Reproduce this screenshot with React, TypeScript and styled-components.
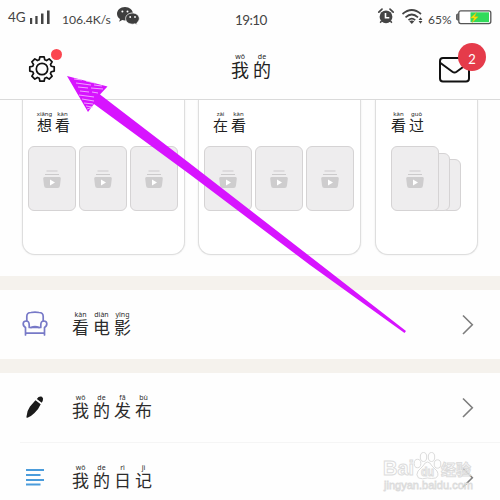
import React from 'react';
import styled, { createGlobalStyle } from 'styled-components';

const GlobalStyle = createGlobalStyle`
  * { box-sizing: border-box; }
  body { margin: 0; background: #fefefe; overflow: hidden; }
  svg { display: block; overflow: visible; }
`;

const Screen = styled.div`
  position: relative;
  width: 500px;
  height: 500px;
  overflow: hidden;
  display: flex;
  flex-direction: column;
  background: #fefefe;
  color: #222;
  font-family: 'Noto Sans', 'Noto Sans CJK SC', sans-serif;
`;

const StatusBar = styled.div`
  flex: none;
  height: 34px;
  display: grid;
  grid-template-columns: 235px 1fr auto;
  padding: 0 8px 0 0;
  color: #444;
`;

const StatusGroup = styled.div`
  display: flex;
  align-items: flex-start;
`;

const StatusText = styled.span<{ $size: number; $top: number; $left?: number; $width: number; $spacing?: number }>`
  font-family: Lato, 'Noto Sans', sans-serif;
  font-size: ${(p) => p.$size}px;
  line-height: 16px;
  width: ${(p) => p.$width}px;
  margin-top: ${(p) => p.$top}px;
  margin-left: ${(p) => p.$left ?? 0}px;
  letter-spacing: ${(p) => p.$spacing ?? 0}px;
  white-space: nowrap;
`;

const IconSlot = styled.span<{ $top: number; $left: number }>`
  margin: ${(p) => p.$top}px 0 0 ${(p) => p.$left}px;
`;

const Header = styled.header`
  flex: none;
  height: 66px;
  display: grid;
  grid-template-columns: 231px 1fr 61px;
  border-bottom: 1px solid #dadada;
`;

const HeaderButton = styled.div<{ $top: number; $left: number; $size: number }>`
  position: relative;
  width: ${(p) => p.$size}px;
  height: 28px;
  margin: ${(p) => p.$top}px 0 0 ${(p) => p.$left}px;
`;

const RedDot = styled.span`
  position: absolute;
  top: -7px;
  right: -7px;
  width: 11px;
  height: 11px;
  border-radius: 50%;
  background: #fb4650;
`;

const CountBadge = styled.span`
  position: absolute;
  top: -14px;
  right: -16px;
  width: 28px;
  height: 28px;
  border-radius: 50%;
  background: #e53b4a;
  color: #fff;
  font: 13px/33px Lato, sans-serif;
  text-align: center;
`;

const TitleSlot = styled.div`
  padding-top: 19px;
`;

const Phrase = styled.div<{ $gap: number }>`
  display: flex;
  gap: ${(p) => p.$gap}px;
`;

const Glyph = styled.div<{ $size: number }>`
  width: ${(p) => p.$size}px;
  display: flex;
  flex-direction: column;
  align-items: center;
  font-family: 'Noto Sans CJK SC', sans-serif;
  font-size: ${(p) => p.$size}px;
  line-height: ${(p) => p.$size - 1}px;
`;

const Pinyin = styled.span<{ $size: number }>`
  height: 8px;
  font-family: 'Noto Sans', sans-serif;
  font-size: ${(p) => p.$size}px;
  line-height: 8px;
  white-space: nowrap;
`;

const Shelf = styled.section`
  flex: none;
  height: 176px;
  display: flex;
  padding-left: 22px;
  gap: 13px;
`;

const Card = styled.div<{ $width: number; $inset: number }>`
  width: ${(p) => p.$width}px;
  height: 155px;
  padding: 10px 0 0 ${(p) => p.$inset}px;
  border: 1px solid #dedede;
  border-top: 0;
  border-radius: 0 0 13px 13px;
  box-shadow: 0 0 2px #e7e7e7;
  background: #fff;
  clip-path: inset(0 -3px -3px -3px);

  &:last-child { margin-left: 1px; }
`;

const CardTitle = styled.div<{ $indent: number }>`
  height: 36px;
  padding-left: ${(p) => p.$indent}px;
`;

const Tiles = styled.div`
  display: flex;
  gap: 3px;
  align-items: flex-end;
`;

const Tile = styled.div`
  flex: none;
  position: relative;
  z-index: 3;
  width: 48px;
  height: 65px;
  display: flex;
  justify-content: center;
  padding-top: 23px;
  border: 1px solid #d5d3d4;
  border-radius: 6px;
  background: #eeedee;
`;

const BackTile = styled(Tile)<{ $height: number; $layer: number }>`
  width: 20px;
  height: ${(p) => p.$height}px;
  margin-left: -12px;
  z-index: ${(p) => p.$layer};
`;

const Band = styled.div`
  flex: none;
  height: 14px;
  background: #f5f2ed;
`;

const Row = styled.div<{ $divided?: boolean }>`
  flex: none;
  height: ${(p) => (p.$divided ? 70 : 69)}px;
  display: grid;
  grid-template-columns: 72px 1fr 38px;

  &::after {
    content: '';
    display: ${(p) => (p.$divided ? 'block' : 'none')};
    grid-column: 1 / -1;
    height: 1px;
    margin-left: 20px;
    background: #f5f5f5;
  }
`;

const RowIcon = styled.div`
  height: 68px;
  display: flex;
  align-items: center;
  padding-left: 22px;
`;

const RowLabel = styled.div`
  padding-top: 21px;
  color: #2b2b2b;
`;

const RowArrow = styled.div`
  padding-top: 25px;
`;

const ArrowOverlay = styled.svg`
  position: absolute;
  inset: 0;
  z-index: 10;
`;

const Watermark = styled.svg`
  position: absolute;
  left: 380px;
  top: 444px;
  z-index: 8;
  font-family: 'Liberation Sans', 'Noto Sans CJK SC', sans-serif;
`;

type Pair = [string, string];

function Annotated({ pairs, size, gap, small = 7 }: { pairs: Pair[]; size: number; gap: number; small?: number }) {
  return (
    <Phrase $gap={gap}>
      {pairs.map(([char, sound]) => (
        <Glyph key={char} $size={size}>
          <Pinyin $size={small}>{sound}</Pinyin>
          {char}
        </Glyph>
      ))}
    </Phrase>
  );
}

function Signal() {
  return (
    <svg width="21" height="15" fill="#444">
      <rect x="0" y="8" width="2.2" height="6" />
      <rect x="5.3" y="6" width="2.3" height="8" />
      <rect x="11" y="3.5" width="2.5" height="10.5" />
      <rect x="17" y="0.5" width="2.6" height="13.5" />
    </svg>
  );
}

function WeChat() {
  return (
    <svg width="23" height="20">
      <path d="M8 0C3.3 0 0 3 0 6.8c0 2.3 1.1 4 3 5.2l-.8 2.7 3-1.6c1 .3 1.8.4 2.8.4C12.500 13.500 16 10.500 16 6.800S12.500 0 8 0Z" fill="#3e3e3e" />
      <path d="M15.500 6C11.500 6 8.600 8.500 8.600 11.600s2.900 5.600 6.900 5.600c.9 0 1.700-.1 2.500-.4l2.300 1.300-.6-2.100c1.600-1.100 2.600-2.600 2.600-4.400C22.300 8.500 19.400 6 15.500 6Z" fill="#3e3e3e" stroke="#fefefe" strokeWidth=".8" />
      <g fill="#fff"><circle cx="5.400" cy="4.500" r="1" /><circle cx="10.500" cy="4.500" r="1" /><circle cx="13.200" cy="10" r=".9" /><circle cx="18" cy="10" r=".9" /></g>
    </svg>
  );
}

function Alarm() {
  return (
    <svg width="16" height="17">
      <path d="M.8 4.200 4 1.200M15.200 4.200 12 1.200" stroke="#444" strokeWidth="1.700" strokeLinecap="round" />
      <path d="M3.500 13 2.200 14.800M12.500 13l1.300 1.800" stroke="#444" strokeWidth="1.500" />
      <circle cx="8" cy="8.800" r="6.400" fill="#444" />
      <path d="M7.500 5V9.700H11.300" fill="none" stroke="#fff" strokeWidth="1.600" />
    </svg>
  );
}

function Wifi() {
  return (
    <svg width="21" height="16" fill="none" stroke="#444" strokeWidth="1.700">
      <path d="M.5 5Q9.800-3 19 5M3.500 8.300Q9.800 2.700 16 8.300M6.500 11.200Q9.800 8 13.200 11.200" />
      <path d="M7.300 12.200Q9.800 10.700 12.300 12.200L9.800 15Z" fill="#444" stroke="none" />
      <path d="M18.500 8.200 20.400 11H16.600ZM18.500 14.800 20.400 12H16.600Z" fill="#444" stroke="none" />
    </svg>
  );
}

function Battery() {
  return (
    <svg width="36" height="15">
      <path d="M3 4H1.500Q.6 4 .6 5V9Q.6 10 1.500 10H3" fill="#777" stroke="#555" />
      <rect x="2.800" y=".8" width="32" height="12.800" rx="2" fill="#fff" stroke="#555" strokeWidth="1.300" />
      <path d="M14.500 2.300H33V12.200H14.500Z" fill="#31db5b" />
      <path d="m20.500 2.500-6 5.600h3.700l-2 4.400 6-5.700h-3.700Z" fill="#ffe500" stroke="#cbb51e" strokeWidth=".5" />
    </svg>
  );
}

function Gear() {
  const outline = Array.from({ length: 8 }, (_, i) => {
    const a = (i * Math.PI) / 4;
    const at = (r: number, d: number) =>
      `${(13 + r * Math.sin(a + d)).toFixed(2)} ${(13 - r * Math.cos(a + d)).toFixed(2)}`;
    return `${i ? 'L' : 'M'}${at(9.6, -0.29)}L${at(12.4, -0.17)}L${at(12.4, 0.17)}L${at(9.6, 0.29)}`;
  }).join('');
  return (
    <svg width="26" height="26" fill="none" stroke="#111" strokeWidth="1.700" strokeLinejoin="round">
      <path d={`${outline}Z`} />
      <circle cx="13" cy="13" r="5.700" />
    </svg>
  );
}

function Mail() {
  return (
    <svg width="31" height="26" fill="none" stroke="#111" strokeWidth="2">
      <rect x="1" y="1" width="29" height="23.500" rx="3" />
      <path d="M1.500 6 13.400 14.700Q15.500 16.200 17.600 14.700L29.500 6" />
    </svg>
  );
}

function Video() {
  return (
    <svg width="18" height="19">
      <path d="M3.500 1H14.500M2 4.500H16" stroke="#cbcacb" strokeWidth="1.100" />
      <path d="M1.500 7H16.500Q18 7 17.800 8.500L17 15.500Q16.800 18 14.500 18H3.500Q1.200 18 1 15.500L.2 8.500Q0 7 1.500 7Z" fill="#cecdce" />
      <path d="M7 9.500 12 12.500 7 15.500Z" fill="#fff" />
    </svg>
  );
}

function Sofa() {
  return (
    <svg width="26" height="26" fill="none" stroke="#7779c7" strokeWidth="1.700" strokeLinejoin="round" strokeLinecap="round">
      <path d="M4.800 10V5.500Q4.800 1.500 9 1.500Q13 .8 17 1.500Q21.200 1.500 21.200 5.500V10" />
      <path d="M3.500 24V16.500Q1 15 1.200 12.500Q1.500 10 4.200 10Q7.200 10 7.200 14V16.500H18.800V14Q18.800 10 21.800 10Q24.500 10 24.800 12.500Q25 15 22.500 16.500V24M3.500 22.200H22.500" />
      <path d="M9 16.500Q13 14.800 17 16.500" />
    </svg>
  );
}

function Pen() {
  return (
    <svg width="24" height="23" viewBox="-3 0 24 23" fill="#1b1b1b">
      <path d="M10.500 4.300 15.700 8.300Q13.500 13.500 9.500 17Q6.500 20 3 21.500Q1 22.500 1.500 20.500Q2 14.500 5 10.500Z" />
      <path d="M11.800 2.900Q14-.2 17 .8Q18.800 2.400 17.700 5L16.700 6.800Z" />
    </svg>
  );
}

function Lines() {
  return (
    <svg width="22" height="17" stroke="#4b9cdb" strokeWidth="1.900">
      <path d="M4 1H22M4 6H18.500M4 11H22M4 15.500H18.500" />
    </svg>
  );
}

function Chevron() {
  return (
    <svg width="12" height="20" fill="none" stroke="#7d7d7d" strokeWidth="1.600">
      <path d="M1 .5 10.300 9.700 1 19" />
    </svg>
  );
}

function ListRow({ icon, pairs, divided }: { icon: React.ReactNode; pairs: Pair[]; divided?: boolean }) {
  return (
    <Row $divided={divided}>
      <RowIcon>{icon}</RowIcon>
      <RowLabel><Annotated pairs={pairs} size={17} gap={4} /></RowLabel>
      <RowArrow><Chevron /></RowArrow>
    </Row>
  );
}

export default function App() {
  return (
    <>
      <GlobalStyle />
      <Screen>
        <StatusBar>
          <StatusGroup>
            <StatusText $size={13.5} $top={9} $left={8} $width={22}>4G</StatusText>
            <IconSlot $top={9.5} $left={0}><Signal /></IconSlot>
            <StatusText $size={12.2} $top={12} $left={11} $width={52} $spacing={-0.1}>106.4K/s</StatusText>
            <IconSlot $top={7} $left={2.5}><WeChat /></IconSlot>
          </StatusGroup>
          <StatusGroup>
            <StatusText $size={13.5} $top={12} $width={32} $spacing={-0.6}>19:10</StatusText>
          </StatusGroup>
          <StatusGroup>
            <IconSlot $top={8} $left={0}><Alarm /></IconSlot>
            <IconSlot $top={9} $left={8}><Wifi /></IconSlot>
            <StatusText $size={12} $top={12} $left={5} $width={24}>65%</StatusText>
            <IconSlot $top={9.5} $left={4}><Battery /></IconSlot>
          </StatusGroup>
        </StatusBar>
        <Header>
          <HeaderButton $top={22} $left={29} $size={26}><Gear /><RedDot /></HeaderButton>
          <TitleSlot><Annotated pairs={[['我', 'wǒ'], ['的', 'de']]} size={18} gap={4} /></TitleSlot>
          <HeaderButton $top={23} $left={0} $size={31}><Mail /><CountBadge>2</CountBadge></HeaderButton>
        </Header>
        <Shelf>
          <Card $width={163} $inset={5}>
            <CardTitle $indent={9}><Annotated pairs={[['想', 'xiǎng'], ['看', 'kàn']]} size={15} gap={3} small={6} /></CardTitle>
            <Tiles><Tile><Video /></Tile><Tile><Video /></Tile><Tile><Video /></Tile></Tiles>
          </Card>
          <Card $width={163} $inset={5}>
            <CardTitle $indent={9}><Annotated pairs={[['在', 'zài'], ['看', 'kàn']]} size={15} gap={3} small={6} /></CardTitle>
            <Tiles><Tile><Video /></Tile><Tile><Video /></Tile><Tile><Video /></Tile></Tiles>
          </Card>
          <Card $width={103} $inset={15}>
            <CardTitle $indent={0}><Annotated pairs={[['看', 'kàn'], ['过', 'guò']]} size={15} gap={3} small={6} /></CardTitle>
            <Tiles>
              <Tile><Video /></Tile>
              <BackTile $height={58} $layer={2} />
              <BackTile $height={52} $layer={1} />
            </Tiles>
          </Card>
        </Shelf>
        <Band />
        <ListRow icon={<Sofa />} pairs={[['看', 'kàn'], ['电', 'diàn'], ['影', 'yǐng']]} />
        <Band />
        <ListRow icon={<Pen />} pairs={[['我', 'wǒ'], ['的', 'de'], ['发', 'fā'], ['布', 'bù']]} divided />
        <ListRow icon={<Lines />} pairs={[['我', 'wǒ'], ['的', 'de'], ['日', 'rì'], ['记', 'jì']]} />
        <Watermark width="100" height="50" fill="#fff" fillOpacity=".35" stroke="#dcdcdc" strokeWidth="1">
          <text x="3" y="31" fontSize="21" fontWeight="700" textLength="31" lengthAdjust="spacingAndGlyphs">Bai</text>
          <ellipse cx="37.5" cy="19.5" rx="3.3" ry="4.2" />
          <ellipse cx="43.5" cy="13" rx="3.2" ry="4.5" />
          <ellipse cx="51.5" cy="13" rx="3.2" ry="4.500" />
          <ellipse cx="57.5" cy="20" rx="3.3" ry="4.2" />
          <path d="M47.500 18Q50 18 52 22L57 27Q59.500 32 55.500 34Q51.500 35 47.500 34Q42 35.500 38.500 34Q35.500 31 38 27L43 22Q45 18 47.500 18Z" />
          <text x="41" y="31.5" fontSize="12" fontWeight="700" textLength="13" lengthAdjust="spacingAndGlyphs">du</text>
          <text x="61" y="31" fontSize="15" fontWeight="700" textLength="30" fontFamily="Noto Sans CJK SC">经验</text>
          <text x="4" y="45" fontSize="11" textLength="89" strokeWidth=".8" lengthAdjust="spacingAndGlyphs">jingyan.baidu.com</text>
        </Watermark>
        <ArrowOverlay width="500" height="500">
          <path d="M67 76 107.500 86.500 100 94.500 190 163.500 321 265 406 331 404.500 333 310 265 190 174.500 94 104 88 112Z" fill="#d714ff" />
          <path d="m74 79 8 1m4 1 9 2m-19 0 15 2m3 0 8 1m-24 1 10 1m3 0 12 1m-23 2 9 1m3 0 6 1m-19 2 15 2m-12 2 12 2m-10 2 9 1m-7 2 6 1m-5 2 6-2" fill="none" stroke="#f6c9ff" strokeWidth=".8" />
        </ArrowOverlay>
      </Screen>
    </>
  );
}
